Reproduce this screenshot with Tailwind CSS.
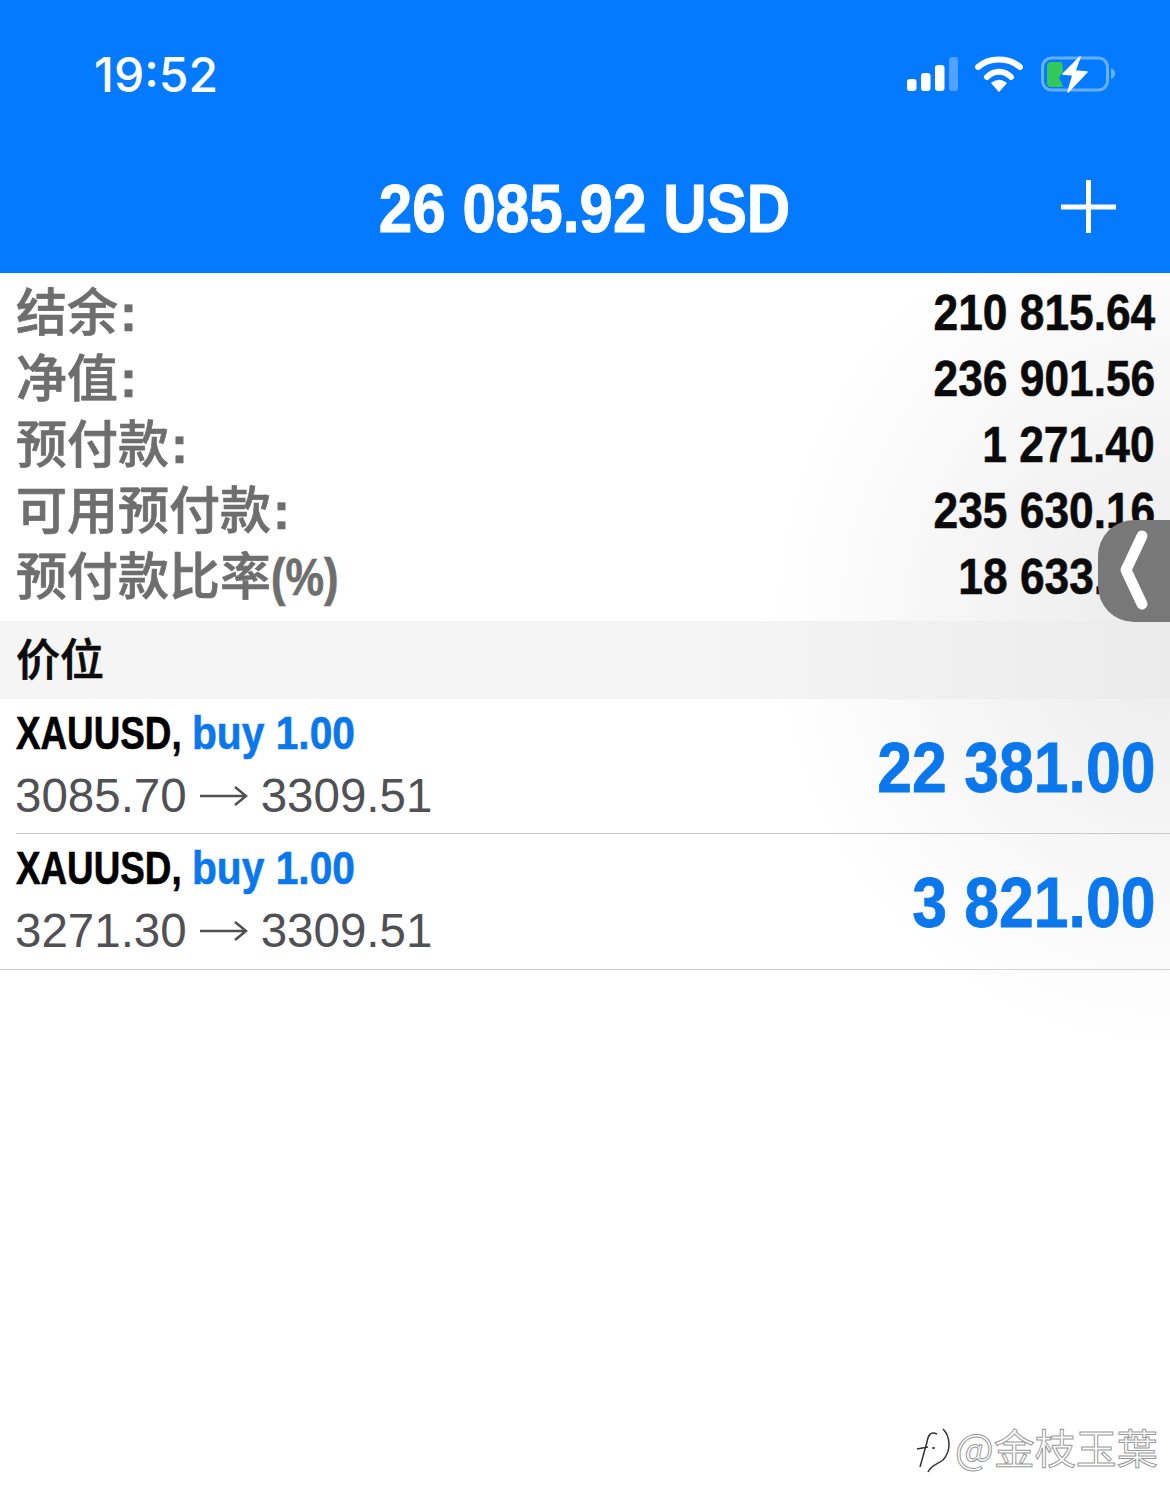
<!DOCTYPE html>
<html lang="zh">
<head>
<meta charset="utf-8">
<script src="https://cdn.jsdelivr.net/npm/@tailwindcss/browser@4"></script>
</head>
<body class="m-0 bg-white">
<div class="relative w-[1170px] h-[1512px] overflow-hidden font-['Liberation_Sans','Noto_Sans_CJK_SC',sans-serif] bg-[radial-gradient(ellipse_400px_430px_at_100%_620px,#ebebeb,#ffffff)]">
  <header class="relative h-[273px] bg-[#037aff] text-white">
    <div class="flex items-center justify-between h-[148px] pl-[94px] pr-[54px]">
      <span class="pt-[2px] text-[48px] leading-none font-medium font-['Inter',sans-serif]">19:52</span>
      <div class="flex items-center gap-[17px]">
        <svg width="51" height="36" viewBox="0 0 51 36"><rect x="0" y="23" width="9.500" height="12" rx="3" fill="#fff"/><rect x="14" y="17" width="9.500" height="18" rx="3" fill="#fff"/><rect x="28" y="9" width="9.500" height="26" rx="3" fill="#fff"/><rect x="42" y="1" width="9" height="34" rx="3" fill="#fff" fill-opacity=".3"/></svg>
        <svg width="48" height="36" viewBox="0 0 48 36"><path d="M3 11C14 1 34 1 45 11" fill="none" stroke="#fff" stroke-width="6" stroke-linecap="round"/><path d="M12 21C19 14 29 14 36 21" fill="none" stroke="#fff" stroke-width="6" stroke-linecap="round"/><path d="M24 35L17 27Q24 22 31 27Z" fill="#fff" stroke="#fff" stroke-width="1.500" stroke-linejoin="round"/></svg>
        <svg class="ml-px" width="75" height="38" viewBox="0 0 75 38"><rect x="1.500" y="3" width="65" height="32" rx="9" fill="none" stroke="#fff" stroke-opacity=".4" stroke-width="3"/><path d="M70 13C73 14 74 16 74 18.500C74 21 73 23 70 24Z" fill="#fff" fill-opacity=".4"/><path d="M6 11Q6 7 10 7H21Q22 12 22 17Q19 20 18 23Q21 27 22 32H10Q6 32 6 28Z" fill="#34c759"/><path d="M39 2L22 19L32 20L27 37L46 17L34 16Z" fill="#fff" stroke="#fff" stroke-width="1.500" stroke-linejoin="round"/></svg>
      </div>
    </div>
    <div class="absolute left-0 right-0 top-[169px] text-center text-[68px] leading-[78px] font-bold [-webkit-text-stroke:1px_#fff]"><span class="inline-block -translate-x-px scale-x-[0.885] whitespace-nowrap">26 085.92 USD</span></div>
    <svg class="absolute left-[1061px] top-[180px]" width="55" height="55" viewBox="0 0 55 55"><path d="M27.500 0V53M0 27H55" stroke="#fff" stroke-width="5"/></svg>
  </header>

  <section class="pt-[7px] h-[348px] pl-[16px] pr-[15px] text-[#6e6e6e]">
    <div class="flex justify-between items-center h-[66px]"><span class="pt-[3px] text-[51px] font-medium [-webkit-text-stroke:0.7px_#6e6e6e] whitespace-nowrap">结余<b class="ml-[2px]">:</b></span><span class="inline-block origin-right scale-x-[0.886] text-[50px] font-bold text-[#0a0a0a] [-webkit-text-stroke:0.6px_#0a0a0a] whitespace-nowrap">210 815.64</span></div>
    <div class="flex justify-between items-center h-[66px]"><span class="pt-[3px] text-[51px] font-medium [-webkit-text-stroke:0.7px_#6e6e6e] whitespace-nowrap">净值<b class="ml-[2px]">:</b></span><span class="inline-block origin-right scale-x-[0.886] text-[50px] font-bold text-[#0a0a0a] [-webkit-text-stroke:0.6px_#0a0a0a] whitespace-nowrap">236 901.56</span></div>
    <div class="flex justify-between items-center h-[66px]"><span class="pt-[3px] text-[51px] font-medium [-webkit-text-stroke:0.7px_#6e6e6e] whitespace-nowrap">预付款<b class="ml-[2px]">:</b></span><span class="inline-block origin-right scale-x-[0.886] text-[50px] font-bold text-[#0a0a0a] [-webkit-text-stroke:0.6px_#0a0a0a] whitespace-nowrap">1 271.40</span></div>
    <div class="flex justify-between items-center h-[66px]"><span class="pt-[3px] text-[51px] font-medium [-webkit-text-stroke:0.7px_#6e6e6e] whitespace-nowrap">可用预付款<b class="ml-[2px]">:</b></span><span class="inline-block origin-right scale-x-[0.886] text-[50px] font-bold text-[#0a0a0a] [-webkit-text-stroke:0.6px_#0a0a0a] whitespace-nowrap">235 630.16</span></div>
    <div class="flex justify-between items-center h-[66px]"><span class="pt-[3px] text-[51px] font-medium [-webkit-text-stroke:0.7px_#6e6e6e] whitespace-nowrap">预付款比率<b class="inline-block origin-left scale-x-[0.85]">(%)</b></span><span class="inline-block origin-right scale-x-[0.886] text-[50px] font-bold text-[#0a0a0a] [-webkit-text-stroke:0.6px_#0a0a0a] whitespace-nowrap">18 633.85</span></div>
  </section>

  <div class="absolute left-[1098px] top-[520px] w-[72px] h-[102px] rounded-l-[36px] bg-[#787878] flex items-center">
    <svg class="ml-[21px]" width="32" height="88" viewBox="0 0 32 88"><path d="M23 9L7 43L23 77" fill="none" stroke="#fff" stroke-width="11" stroke-linecap="round" stroke-linejoin="round"/></svg>
  </div>

  <div class="h-[78px] pl-[16px] pt-[2px] flex items-center bg-[linear-gradient(90deg,#f5f5f5,#f5f5f5_60%,#ebebeb)] text-[44px] font-medium [-webkit-text-stroke:0.7px_#0c0c0c] text-[#0c0c0c]">价位</div>

  <div class="flex justify-between h-[135px] pl-[16px] pr-[15px] relative">
    <div class="pt-[5px]">
      <div class="flex text-[46px] leading-[58px] font-bold whitespace-nowrap [-webkit-text-stroke:0.6px_currentColor]"><span class="w-[176px] origin-left scale-x-[0.8] text-black">XAUUSD,</span><span class="origin-left scale-x-[0.885] text-[#0a78ec]">buy 1.00</span></div>
      <div class="flex items-center -ml-px mt-[4px] text-[47.500px] leading-[60px] text-[#505055] whitespace-nowrap">3085.70<svg class="mx-[13px]" width="48" height="24" viewBox="0 0 48 24"><path d="M0 12H46M35 3L46 12L35 21" fill="none" stroke="#505055" stroke-width="2.500"/></svg>3309.51</div>
    </div>
    <span class="inline-block self-center pt-[3px] origin-right scale-x-[0.893] text-[70px] font-bold text-[#0a78ec] [-webkit-text-stroke:0.8px_#0a78ec] whitespace-nowrap">22 381.00</span>
    <div class="absolute left-[16px] right-0 bottom-0 h-px bg-[#c8c8c8]"></div>
  </div>
  <div class="flex justify-between h-[136px] pl-[16px] pr-[15px] relative">
    <div class="pt-[5px]">
      <div class="flex text-[46px] leading-[58px] font-bold whitespace-nowrap [-webkit-text-stroke:0.6px_currentColor]"><span class="w-[176px] origin-left scale-x-[0.8] text-black">XAUUSD,</span><span class="origin-left scale-x-[0.885] text-[#0a78ec]">buy 1.00</span></div>
      <div class="flex items-center -ml-px mt-[4px] text-[47.500px] leading-[60px] text-[#505055] whitespace-nowrap">3271.30<svg class="mx-[13px]" width="48" height="24" viewBox="0 0 48 24"><path d="M0 12H46M35 3L46 12L35 21" fill="none" stroke="#505055" stroke-width="2.500"/></svg>3309.51</div>
    </div>
    <span class="inline-block self-center pt-[3px] origin-right scale-x-[0.893] text-[70px] font-bold text-[#0a78ec] [-webkit-text-stroke:0.8px_#0a78ec] whitespace-nowrap">3 821.00</span>
    <div class="absolute left-0 right-0 bottom-0 h-px bg-[#d0d0d0]"></div>
  </div>

  <div class="absolute left-[916px] top-[1424px] flex items-center">
    <svg width="38" height="50" viewBox="0 0 38 50"><path d="M1 25L12 23M16 24H19M21 10C14 7 12 12 11 18L4 43M27 5C34 12 36 26 27 36C22 40 15 41 12 48" fill="none" stroke="#333" stroke-width="1.500"/></svg>
    <span class="ml-[1px] -mt-[6px] text-[41px] leading-[46px] text-white [-webkit-text-stroke:1px_#999] whitespace-nowrap font-['Noto_Sans_CJK_TC',sans-serif]">@金枝玉葉</span>
  </div>
</div>
</body>
</html>
